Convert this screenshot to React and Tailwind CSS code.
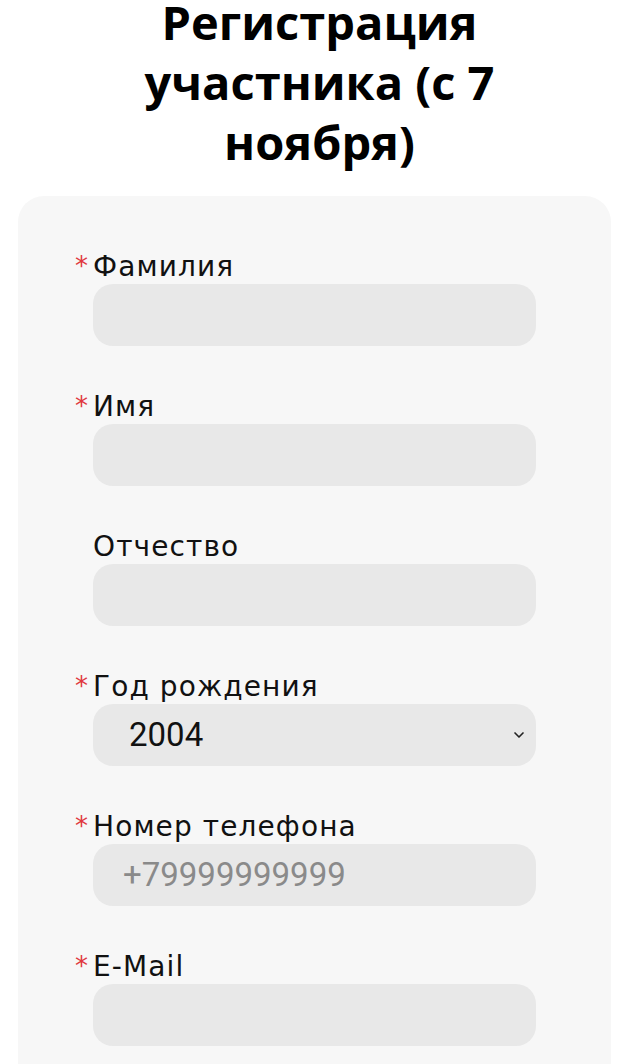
import { ChevronDown } from 'lucide-react';

const fields = [
  { label: 'Фамилия', required: true },
  { label: 'Имя', required: true },
  { label: 'Отчество', required: false },
  { label: 'Год рождения', required: true, select: '2004' },
  { label: 'Номер телефона', required: true, placeholder: '+79999999999' },
  { label: 'E-Mail', required: true },
];

export default function App() {
  return (
    <div className="min-h-screen bg-white font-['DejaVu_Sans',_sans-serif] overflow-hidden">
      <h1 className="-mt-[8px] px-6 text-center font-['Open_Sans',_sans-serif] text-[47px] leading-[60px] font-bold text-black">
        Регистрация<br />участника (с 7<br />ноября)
      </h1>

      <div className="ml-[18px] mr-[28px] mt-[24px] rounded-t-[26px] bg-[#f7f7f7] px-[75px] pt-[54px] pb-10">
        <div className="flex flex-col gap-[44px]">
          {fields.map(f => (
            <div key={f.label}>
              <div className="-ml-[18px] flex items-start">
                <span className="w-[18px] pt-[3px] text-[26px] leading-[26px] text-[#e0393e]">{f.required ? '*' : ''}</span>
                <span className="text-[28px] leading-[34px] tracking-[1.1px] text-[#111]">{f.label}</span>
              </div>
              {f.select ? (
                <div className="flex h-[62px] items-center justify-between rounded-[20px] bg-[#e8e8e8] pl-9 pr-[9px]">
                  <span className="font-['Roboto',_sans-serif] text-[33px] text-[#111]">{f.select}</span>
                  <ChevronDown size={16} strokeWidth={2.5} className="text-[#222]" />
                </div>
              ) : (
                <div className="flex h-[62px] items-center rounded-[20px] bg-[#e8e8e8] pl-[30px]">
                  {f.placeholder && (
                    <span className="font-['Roboto',_sans-serif] text-[33px] text-[#8a8a8a]">{f.placeholder}</span>
                  )}
                </div>
              )}
            </div>
          ))}
        </div>
      </div>
    </div>
  );
}
